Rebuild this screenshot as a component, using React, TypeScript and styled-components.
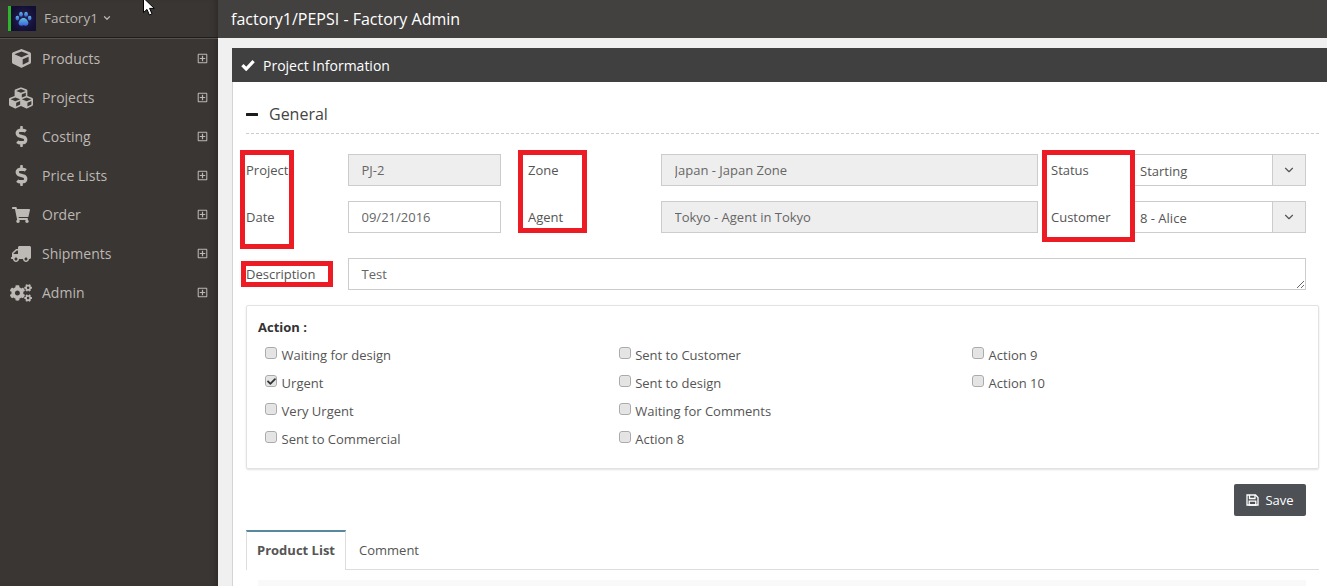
import React from "react";
import styled, { createGlobalStyle } from "styled-components";
import { FaCube, FaCubes, FaDollarSign, FaShoppingCart, FaTruck, FaCogs, FaCheck, FaRegPlusSquare } from "react-icons/fa";
import { ChevronDown } from "lucide-react";

const Global = createGlobalStyle`
  html, body { margin: 0; padding: 0; height: 586px; overflow: hidden; background: #fff; }
  body { font-family: "Open Sans", "Liberation Sans", sans-serif; font-size: 13px; color: #555; }
  * { box-sizing: border-box; }
`;

const Page = styled.div`
  position: relative;
  display: flex;
  width: 1327px;
  height: 586px;
  overflow: hidden;
`;

const Sidebar = styled.aside`
  flex: 0 0 218px;
  background: #3a3633;
  box-shadow: inset -6px 0 6px -4px rgba(0, 0, 0, 0.25);
`;

const Brand = styled.div`
  height: 39px;
  padding: 6px 0 0 8px;
  display: flex;
  align-items: flex-start;
  border-bottom: 1px solid #55514e;
  box-shadow: inset 0 -1px 0 #1f1d1b;
`;

const LogoBox = styled.div`
  width: 28px;
  height: 25px;
  border-left: 3px solid #2fb52c;
  background: radial-gradient(circle at 50% 50%, #2a2058, #120f33 75%);
  display: flex;
  align-items: center;
  justify-content: center;
`;

const BrandName = styled.div`
  margin: -1px 0 0 8px;
  height: 25px;
  display: flex;
  align-items: center;
  gap: 4px;
  color: #b8b4b0;
  font-size: 13.5px;
`;

const Nav = styled.nav`
  display: flex;
  flex-direction: column;
`;

const NavItem = styled.div`
  height: 39px;
  padding: 0 10px 0 0;
  display: flex;
  align-items: center;
  color: #bcb8b4;
  font-size: 14px;
`;

const NavIcon = styled.span<{ $flip?: boolean }>`
  flex: 0 0 42px;
  display: flex;
  justify-content: center;
  color: #bdb9b5;
  transform: ${(p) => (p.$flip ? "scaleX(-1)" : "none")};
`;

const NavLabel = styled.span`
  flex: 1;
`;

const Main = styled.main`
  flex: 1;
  min-width: 0;
  display: flex;
  flex-direction: column;
  background: #f0f0f0;
`;

const TopBar = styled.header`
  flex: 0 0 38px;
  background: #434140;
  color: #fff;
  font-size: 16px;
  display: flex;
  align-items: center;
  padding-left: 13px;
`;

const Panel = styled.section`
  flex: 1;
  margin: 10px 0 0 14px;
  background: #fff;
  border-left: 1px solid #d4d4d4;
  min-height: 0;
`;

const PanelHead = styled.div`
  height: 34px;
  margin-left: -1px;
  background: #404040;
  color: #fff;
  font-size: 14px;
  font-weight: 400;
  display: flex;
  align-items: center;
  gap: 8px;
  padding-left: 9px;
`;

const PanelBody = styled.div`
  width: 1073px;
  margin-left: 13px;
`;

const SectionTitle = styled.div`
  height: 52px;
  border-bottom: 1px dashed #ccc;
  display: flex;
  align-items: center;
  gap: 11px;
  color: #444;
  font-size: 16px;
  padding-top: 13px;
`;

const FormGrid = styled.div`
  margin-top: 20px;
  display: grid;
  grid-template-columns: 102px 153px 160px 377px 96px 172px;
  grid-auto-rows: 32px;
  row-gap: 15px;
  align-items: center;
`;

const Label = styled.label<{ $inset?: number }>`
  padding-left: ${(p) => p.$inset ?? 0}px;
  color: #555;
  font-size: 13px;
`;

const TextInput = styled.input`
  width: 100%;
  height: 32px;
  border: 1px solid #ccc;
  padding: 0 12.5px;
  font: 13px "Open Sans", sans-serif;
  color: #666;
  background: ${(p) => (p.readOnly ? "#eee" : "#fff")};
  border-radius: 0;
  outline: none;
`;

const SelectWrap = styled.div`
  display: flex;
  height: 32px;
  border: 1px solid #ccc;
`;

const Select = styled.select`
  flex: 1;
  min-width: 0;
  appearance: none;
  border: 0;
  background: #fff;
  padding: 2px 5px 0;
  font: 13px "Open Sans", sans-serif;
  color: #555;
  outline: none;
`;

const SelectArrow = styled.span`
  flex: 0 0 33px;
  background: #eee;
  border-left: 1px solid #ccc;
  color: #555;
  display: flex;
  align-items: center;
  justify-content: center;
`;

const DescRow = styled.div`
  margin-top: 25px;
  display: grid;
  grid-template-columns: 102px 958px;
  align-items: center;
`;

const Area = styled.textarea`
  display: block;
  width: 100%;
  height: 32px;
  border: 1px solid #ccc;
  padding: 6px 12.5px;
  font: 13px "Open Sans", sans-serif;
  color: #666;
  outline: none;
  border-radius: 0;
`;

const ActionBox = styled.div`
  margin-top: 15px;
  height: 164px;
  border: 1px solid #e2e2e2;
  border-radius: 2px;
  box-shadow: 0 1px 2px rgba(0, 0, 0, 0.12);
  padding: 12px 11px 0;
`;

const ActionTitle = styled.div`
  font-weight: 700;
  color: #333;
  font-size: 13px;
  height: 18px;
  line-height: 18px;
`;

const ActionGrid = styled.div`
  margin-top: 5px;
  display: grid;
  grid-template-columns: 353.6px 353.4px 1fr;
  grid-template-rows: repeat(4, 28px);
  grid-auto-flow: column;
  padding-left: 7px;
`;

const CheckRow = styled.label`
  display: flex;
  align-items: center;
  color: #555;
  font-size: 13px;
`;

const CheckBoxMark = styled.span`
  flex: 0 0 12px;
  width: 12px;
  height: 12px;
  margin: -4px 4.6px 0 0;
  border: 1px solid #aaa;
  border-radius: 3px;
  background: #e4e4e4;
  box-shadow: inset 0 0 1px #fff;
  display: flex;
  align-items: center;
  justify-content: center;
  color: #333;
`;

const Actions = styled.div`
  margin-top: 15px;
  padding-right: 13px;
  display: flex;
  justify-content: flex-end;
`;

const SaveButton = styled.button`
  width: 72px;
  height: 32px;
  border: 0;
  border-radius: 2px;
  background: #4d5055;
  color: #fff;
  font: 13px "Open Sans", sans-serif;
  display: flex;
  align-items: center;
  justify-content: center;
  gap: 6px;
`;

const Tabs = styled.div`
  margin-top: 14px;
  height: 40px;
  border-bottom: 1px solid #ddd;
  display: flex;
`;

const Tab = styled.div<{ $active?: boolean }>`
  height: ${(p) => (p.$active ? 40 : 39)}px;
  padding: 0 ${(p) => (p.$active ? 10 : 13)}px 2px;
  display: flex;
  align-items: center;
  font-size: 13px;
  font-weight: ${(p) => (p.$active ? 700 : 400)};
  color: #555;
  background: #fff;
  border-top: 2px solid ${(p) => (p.$active ? "#57889c" : "transparent")};
  border-left: ${(p) => (p.$active ? "1px solid #ddd" : "none")};
  border-right: ${(p) => (p.$active ? "1px solid #ddd" : "none")};
`;

const TabBody = styled.div`
  margin: 10px 13px 0 12px;
  height: 20px;
  background: #f9f9f9;
`;

const Annotation = styled.div<{ $x: number; $y: number; $w: number; $h: number }>`
  position: absolute;
  left: ${(p) => p.$x}px;
  top: ${(p) => p.$y}px;
  width: ${(p) => p.$w}px;
  height: ${(p) => p.$h}px;
  border: 5px solid #ed1c24;
  pointer-events: none;
`;

const Cursor = styled.svg`
  position: absolute;
  left: 142px;
  top: -3px;
  width: 14px;
  height: 20px;
`;

const navItems = [
  { label: "Products", icon: <FaCube size={19} /> },
  { label: "Projects", icon: <FaCubes size={24} /> },
  { label: "Costing", icon: <FaDollarSign size={21} /> },
  { label: "Price Lists", icon: <FaDollarSign size={21} /> },
  { label: "Order", icon: <FaShoppingCart size={18} /> },
  { label: "Shipments", icon: <FaTruck size={20} />, flip: true },
  { label: "Admin", icon: <FaCogs size={22} /> },
];

const actions: [string, boolean][] = [
  ["Waiting for design", false],
  ["Urgent", true],
  ["Very Urgent", false],
  ["Sent to Commercial", false],
  ["Sent to Customer", false],
  ["Sent to design", false],
  ["Waiting for Comments", false],
  ["Action 8", false],
  ["Action 9", false],
  ["Action 10", false],
];

export default function App() {
  return (
    <Page>
      <Global />
      <Sidebar>
        <Brand>
          <LogoBox>
            <svg width="17" height="16" viewBox="0 0 16 15">
              <defs>
                <linearGradient id="paw" x1="0" y1="0" x2="0" y2="1">
                  <stop offset="0" stopColor="#5fc0d8" />
                  <stop offset="1" stopColor="#3a62dc" />
                </linearGradient>
              </defs>
              <g fill="url(#paw)">
                <path d="M8 6.6c2.4 0 4.6 2.6 4.6 5 0 1.8-1.6 2.4-2.6 2.2-.8-.2-1.3-.5-2-.5s-1.2.3-2 .5c-1 .2-2.6-.4-2.6-2.2 0-2.4 2.2-5 4.6-5z" />
                <ellipse cx="2.2" cy="6.6" rx="1.7" ry="2.2" />
                <ellipse cx="5.6" cy="3" rx="1.8" ry="2.4" />
                <ellipse cx="10.4" cy="3" rx="1.8" ry="2.4" />
                <ellipse cx="13.8" cy="6.6" rx="1.7" ry="2.2" />
              </g>
            </svg>
          </LogoBox>
          <BrandName>
            Factory1 <ChevronDown size={10} strokeWidth={3} />
          </BrandName>
        </Brand>
        <Nav>
          {navItems.map((n) => (
            <NavItem key={n.label}>
              <NavIcon $flip={n.flip}>{n.icon}</NavIcon>
              <NavLabel>{n.label}</NavLabel>
              <FaRegPlusSquare size={11} />
            </NavItem>
          ))}
        </Nav>
      </Sidebar>
      <Main>
        <TopBar>factory1/PEPSI - Factory Admin</TopBar>
        <Panel>
          <PanelHead>
            <svg width="14" height="12" viewBox="0 0 14 12">
              <path d="M1.4 6.2 L5.2 10 L12.6 2.2" fill="none" stroke="#fff" strokeWidth="3.2" />
            </svg>
            Project Information
          </PanelHead>
          <PanelBody>
            <SectionTitle>
              <svg width="12" height="3" viewBox="0 0 12 3">
                <rect width="12" height="3" rx="0.5" fill="#1c1c1c" />
              </svg>
              General
            </SectionTitle>
            <FormGrid>
              <Label>Project</Label>
              <TextInput readOnly defaultValue="PJ-2" />
              <Label $inset={27}>Zone</Label>
              <TextInput readOnly defaultValue="Japan - Japan Zone" />
              <Label $inset={13}>Status</Label>
              <SelectWrap>
                <Select defaultValue="Starting">
                  <option>Starting</option>
                </Select>
                <SelectArrow>
                  <ChevronDown size={14} />
                </SelectArrow>
              </SelectWrap>
              <Label>Date</Label>
              <TextInput defaultValue="09/21/2016" onChange={() => {}} />
              <Label $inset={27}>Agent</Label>
              <TextInput readOnly defaultValue="Tokyo - Agent in Tokyo" />
              <Label $inset={13}>Customer</Label>
              <SelectWrap>
                <Select defaultValue="8 - Alice">
                  <option>8 - Alice</option>
                </Select>
                <SelectArrow>
                  <ChevronDown size={14} />
                </SelectArrow>
              </SelectWrap>
            </FormGrid>
            <DescRow>
              <Label>Description</Label>
              <Area defaultValue="Test" />
            </DescRow>
            <ActionBox>
              <ActionTitle>Action :</ActionTitle>
              <ActionGrid>
                {actions.map(([text, on]) => (
                  <CheckRow key={text}>
                    <CheckBoxMark>{on && <FaCheck size={9} />}</CheckBoxMark>
                    {text}
                  </CheckRow>
                ))}
              </ActionGrid>
            </ActionBox>
            <Actions>
              <SaveButton>
                <svg width="13" height="12" viewBox="0 0 13 12" fill="none" stroke="#fff">
                  <path d="M1 1 H9.5 L12 3.5 V11 H1 Z" strokeWidth="1.3" />
                  <path d="M3.5 1 V4.5 H9 V1" strokeWidth="1.3" />
                  <path d="M3.2 7.2 H9.8 V11 H3.2 Z" strokeWidth="1.3" />
                </svg>
                Save
              </SaveButton>
            </Actions>
            <Tabs>
              <Tab $active>Product List</Tab>
              <Tab>Comment</Tab>
            </Tabs>
            <TabBody />
          </PanelBody>
        </Panel>
      </Main>
      <Annotation $x={240} $y={150} $w={54} $h={99} />
      <Annotation $x={518} $y={150} $w={69} $h={83} />
      <Annotation $x={241} $y={261} $w={92} $h={26} />
      <Annotation $x={1042} $y={150} $w={93} $h={92} />
      <Cursor viewBox="0 0 14 20">
        <path d="M1.5 1 L1.5 15.5 L5 12.4 L7.4 18 L10 16.9 L7.6 11.4 L12.3 11.4 Z" fill="#fff" stroke="#000" strokeWidth="1" />
      </Cursor>
    </Page>
  );
}
